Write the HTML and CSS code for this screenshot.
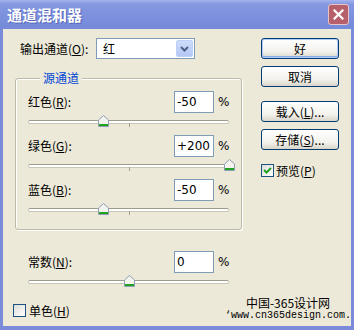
FILE: index.html
```html
<!DOCTYPE html>
<html lang="zh-CN">
<head>
    <meta charset="UTF-8">
    <title>通道混和器</title>
    <link rel="stylesheet" href="styles.css">
</head>
<body>
<div class="window">
    <div class="titlebar">
        <span class="title">通道混和器</span>
        <span class="close">
            <svg width="11" height="11" viewBox="0 0 11 11"><path d="M1.5 1.5 L9.5 9.5 M9.5 1.5 L1.5 9.5" stroke="#fff" stroke-width="2.2" stroke-linecap="square"/></svg>
        </span>
    </div>
    <div class="client">
        <div class="main">
            <div class="left">
                <div class="output-row">
                    <label>输出通道(<u>O</u>):</label>
                    <div class="select">
                        <span>红</span>
                        <span class="drop">
                            <svg width="9" height="6" viewBox="0 0 9 6"><path d="M1 1 L4.5 4.5 L8 1" fill="none" stroke="#4D6185" stroke-width="2"/></svg>
                        </span>
                    </div>
                </div>

                <!-- source channels -->
                <div class="group">
                    <span class="group-title">源通道</span>
                    <div class="slider">
                        <div class="field">
                            <label>红色(<u>R</u>):</label>
                            <input class="num" type="text" value="-50">
                            <span class="pct">%</span>
                        </div>
                        <div class="track">
                            <div class="groove"></div>
                            <span class="tick"></span>
                            <span class="thumb" style="left: 37.5%"><svg width="11" height="12" viewBox="0 0 11 12"><path d="M5.5 0.5 L10.5 5 L10.5 11.5 L0.5 11.5 L0.5 5 Z" fill="#F4F3EE" stroke="#8E9FB5"/><path d="M1 10 H10" stroke="#21A121" stroke-width="2"/></svg></span>
                        </div>
                    </div>
                    <div class="slider">
                        <div class="field">
                            <label>绿色(<u>G</u>):</label>
                            <input class="num" type="text" value="+200">
                            <span class="pct">%</span>
                        </div>
                        <div class="track">
                            <div class="groove"></div>
                            <span class="tick"></span>
                            <span class="thumb" style="left: 100%"><svg width="11" height="12" viewBox="0 0 11 12"><path d="M5.5 0.5 L10.5 5 L10.5 11.5 L0.5 11.5 L0.5 5 Z" fill="#F4F3EE" stroke="#8E9FB5"/><path d="M1 10 H10" stroke="#21A121" stroke-width="2"/></svg></span>
                        </div>
                    </div>
                    <div class="slider">
                        <div class="field">
                            <label>蓝色(<u>B</u>):</label>
                            <input class="num" type="text" value="-50">
                            <span class="pct">%</span>
                        </div>
                        <div class="track">
                            <div class="groove"></div>
                            <span class="tick"></span>
                            <span class="thumb" style="left: 37.5%"><svg width="11" height="12" viewBox="0 0 11 12"><path d="M5.5 0.5 L10.5 5 L10.5 11.5 L0.5 11.5 L0.5 5 Z" fill="#F4F3EE" stroke="#8E9FB5"/><path d="M1 10 H10" stroke="#21A121" stroke-width="2"/></svg></span>
                        </div>
                    </div>
                </div>

                <div class="slider constant">
                    <div class="field">
                        <label>常数(<u>N</u>):</label>
                        <input class="num" type="text" value="0">
                        <span class="pct">%</span>
                    </div>
                    <div class="track">
                        <div class="groove"></div>
                        <span class="tick"></span>
                        <span class="thumb" style="left: 50%"><svg width="11" height="12" viewBox="0 0 11 12"><path d="M5.5 0.5 L10.5 5 L10.5 11.5 L0.5 11.5 L0.5 5 Z" fill="#F4F3EE" stroke="#8E9FB5"/><path d="M1 10 H10" stroke="#21A121" stroke-width="2"/></svg></span>
                    </div>
                </div>
            </div>

            <div class="right">
                <button class="btn default">好</button>
                <button class="btn cancel">取消</button>
                <button class="btn load">载入(<u>L</u>)...</button>
                <button class="btn save">存储(<u>S</u>)...</button>
                <label class="check preview">
                    <span class="box"><svg width="11" height="11" viewBox="0 0 11 11"><path d="M2 5 L4.5 7.5 L9 3" fill="none" stroke="#21A121" stroke-width="2"/></svg></span>
                    <span>预览(<u>P</u>)</span>
                </label>
            </div>
        </div>

        <div class="footer">
            <label class="check mono">
                <span class="box"></span>
                <span>单色(<u>H</u>)</span>
            </label>
            <div class="watermark">
                <div class="wm-cn">中国-365设计网</div>
                <div class="wm-url">‘www.cn365design.com.</div>
            </div>
        </div>
    </div>
</div>
</body>
</html>
```

FILE: styles.css
```css
* {
    box-sizing: border-box;
}

body {
    margin: 0;
    font-family: "Noto Sans CJK SC", sans-serif;
    font-size: 12px;
    line-height: 14px;
    color: #000;
}

u {
    text-decoration: underline;
}

/* Window frame */
.window {
    width: 354px;
    height: 330px;
    display: flex;
    flex-direction: column;
}

.titlebar {
    height: 29px;
    flex: none;
    display: flex;
    align-items: center;
    justify-content: space-between;
    padding: 0 5px 0 7px;
    background: linear-gradient(#A3B4EE, #8599E1 4px, #7B8FDC 60%, #7489D8);
}

.title {
    color: #fff;
    font-weight: bold;
    font-size: 15px;
    text-shadow: 1px 1px 0 #5567BA;
}

.close {
    width: 21px;
    height: 21px;
    border: 1px solid #E8C4C8;
    border-radius: 3px;
    background: #B5606B;
    display: flex;
    align-items: center;
    justify-content: center;
}

.client {
    flex: 1;
    background: #ECE9D8;
    border: solid #7A8BD9;
    border-width: 0 3px 4px 3px;
    padding-top: 9px;
    display: flex;
    flex-direction: column;
}

.main {
    display: flex;
}

.left {
    width: 239px;
    padding-left: 12px;
}

.right {
    width: 78px;
    margin-left: 19px;
    display: flex;
    flex-direction: column;
}

/* Output channel */
.output-row {
    display: flex;
    align-items: center;
    height: 21px;
    margin-left: 5px;
}

.output-row label {
    width: 76px;
}

.select {
    width: 99px;
    height: 21px;
    border: 1px solid #7F9DB9;
    background: #fff;
    display: flex;
    align-items: center;
    justify-content: space-between;
    padding: 0 1px 0 6px;
}

.drop {
    width: 17px;
    height: 17px;
    border: 1px solid #BCD0F8;
    border-radius: 2px;
    background: linear-gradient(#CEDCFC, #B4C8F6);
    display: flex;
    align-items: center;
    justify-content: center;
}

/* Group box */
.group {
    margin-top: 19px;
    border: 1px solid #BDBAAA;
    border-radius: 3px;
    box-shadow: inset 1px 1px 0 #fff, 1px 1px 0 #fff;
    padding: 0 12px 12px;
}

.group-title {
    display: block;
    width: max-content;
    margin: -8px 0 6px 12px;
    padding: 0 3px;
    background: #ECE9D8;
    color: #0046D5;
}

/* Slider rows */
.slider + .slider {
    margin-top: 6px;
}

.field {
    display: flex;
    align-items: center;
    height: 22px;
}

.field label {
    flex: 1;
}

.num {
    width: 40px;
    height: 22px;
    margin: 0;
    border: 1px solid #7F9DB9;
    background: #fff;
    padding: 0 2px;
    font-family: "DejaVu Sans", sans-serif;
    font-size: 12px;
    color: #000;
    outline: none;
}

.pct {
    width: 11px;
    margin-left: 4px;
    font-family: "DejaVu Sans", sans-serif;
    font-size: 12px;
    line-height: 22px;
}

.track {
    position: relative;
    height: 16px;
    padding-top: 7px;
}

.groove {
    height: 4px;
    border: 1px solid #C9C6B6;
    border-top-color: #9D9B8E;
    border-radius: 2px;
    background: #fff;
}

.tick {
    position: absolute;
    left: 50%;
    top: 10px;
    width: 1px;
    height: 4px;
    background: #A19F93;
}

.thumb {
    position: absolute;
    top: 2px;
    width: 11px;
    height: 12px;
    margin-left: -5px;
}

.thumb svg {
    display: block;
}

.constant {
    margin: 21px 13px 0;
}

/* Buttons */
.btn {
    width: 78px;
    height: 21px;
    padding: 0;
    border: 1px solid #003C74;
    border-radius: 3px;
    background: linear-gradient(#FFFFFF, #F3F2EC 65%, #D9D5CA);
    font-family: inherit;
    font-size: 12px;
    color: #000;
}

.btn.default {
    box-shadow: inset 0 0 0 1px #B2CBF4, inset 0 -1px 0 1px #8AAEEC;
}

.btn.cancel,
.btn.save {
    margin-top: 7px;
}

.btn.load {
    margin-top: 14px;
}

/* Checkboxes */
.check {
    display: flex;
    align-items: center;
    gap: 3px;
    height: 13px;
}

.box {
    width: 13px;
    height: 13px;
    border: 1px solid #1C5180;
    background: linear-gradient(135deg, #DCDCD7, #FFFFFF);
    display: flex;
    align-items: center;
    justify-content: center;
}

.preview {
    margin-top: 14px;
    gap: 2px;
}

/* Footer */
.footer {
    margin-top: 7px;
    padding-left: 10px;
    display: flex;
    justify-content: space-between;
    align-items: flex-end;
}

.mono {
    margin-bottom: 5px;
}

.watermark {
    text-align: center;
    line-height: 13px;
}

.wm-url {
    font-family: "Liberation Mono", monospace;
    font-size: 10px;
}
```
